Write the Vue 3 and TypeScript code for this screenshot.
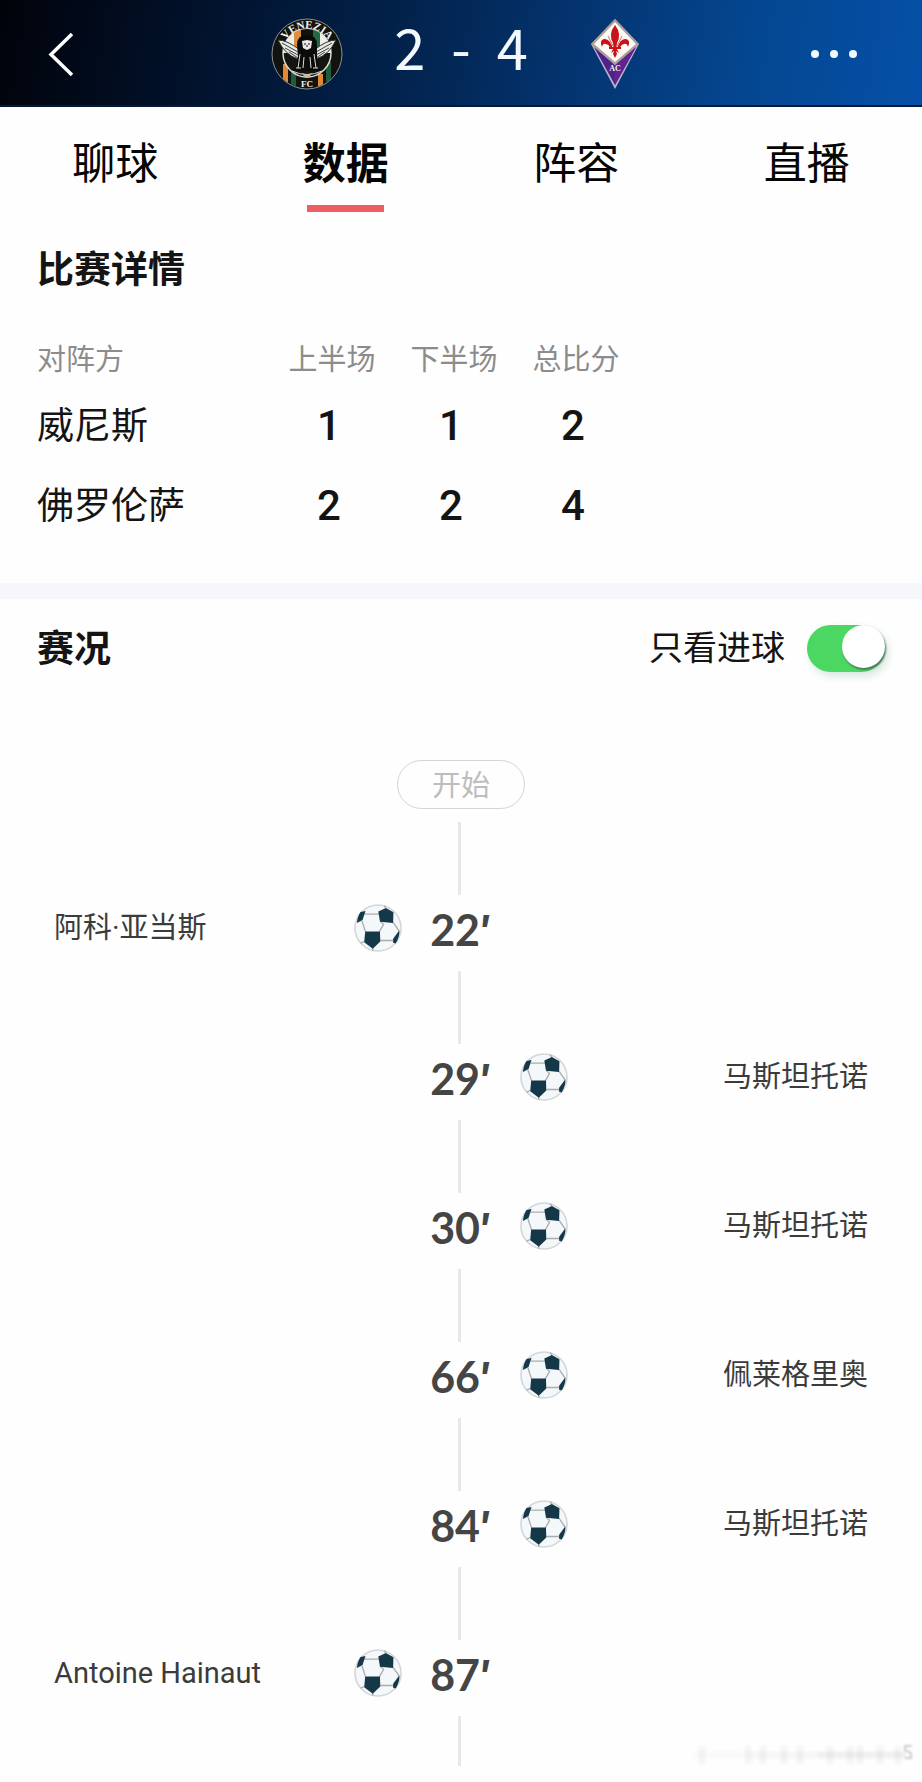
<script setup lang="ts">
import { ref } from 'vue'

interface MatchEvent {
  minute: number
  player: string
  side: 'home' | 'away'
}

const tabs = ['聊球', '数据', '阵容', '直播']
const activeTab = ref('数据')
const goalsOnly = ref(true)

const scores = [
  { team: '威尼斯', first: 1, second: 1, total: 2 },
  { team: '佛罗伦萨', first: 2, second: 2, total: 4 },
]

const events: MatchEvent[] = [
  { minute: 22, player: '阿科·亚当斯', side: 'home' },
  { minute: 29, player: '马斯坦托诺', side: 'away' },
  { minute: 30, player: '马斯坦托诺', side: 'away' },
  { minute: 66, player: '佩莱格里奥', side: 'away' },
  { minute: 84, player: '马斯坦托诺', side: 'away' },
  { minute: 87, player: 'Antoine Hainaut', side: 'home' },
]
</script>

<template>
  <div class="page">
    <svg class="defs" width="0" height="0" aria-hidden="true">
      <symbol id="ball" viewBox="0 0 146 146">
        <circle cx="73" cy="73" r="70" fill="#f5f8fa" stroke="#d3d7db" stroke-width="5" />
        <g fill="none" stroke="#a9adab" stroke-width="4">
          <path d="M32 31H76M80 53L90 62L77 85M24 51L35 84M119 56L137 82M80 111H121M31 114L20 119M57 134V142M97 13L92 5" />
        </g>
        <g fill="#143847">
          <path d="M97 12L74 23L79 54L119 58L120 25Z" />
          <path d="M34 84L79 84L80 114L57 136L31 116Z" />
          <path d="M20 24L35 21L26 49L9 58Q10 38 20 24Z" />
          <path d="M119 106L138 80Q140 98 127 120L119 118Z" />
        </g>
      </symbol>
    </svg>

    <header class="top">
      <button class="icon-btn" type="button" aria-label="返回">
        <svg width="28" height="48" viewBox="0 0 28 48">
          <path d="M24 4L3 24.500L24 45" fill="none" stroke="#fff" stroke-width="3.500" />
        </svg>
      </button>
      <div class="match">
        <svg class="crest" width="72" height="72" viewBox="0 0 72 72" role="img" aria-label="Venezia FC">
          <defs>
            <clipPath id="disc"><circle cx="36" cy="36" r="34.500" /></clipPath>
            <clipPath id="inner"><circle cx="36" cy="35" r="24" /></clipPath>
            <path id="arc" d="M11 31A25.500 25.500 0 0 1 61 31" />
          </defs>
          <circle cx="36" cy="36" r="35" fill="#12130f" stroke="#8b8f90" stroke-width="1" />
          <g clip-path="url(#disc)">
            <path d="M12 46h5v26h-5zM47 56h5v16h-5z" fill="#e08a35" />
            <path d="M20 50h5v22h-5zM55 44h5v26h-5z" fill="#1d5d3c" />
          </g>
          <circle cx="36" cy="35" r="24" fill="#15150f" stroke="#d9dcd8" stroke-width="1.500" />
          <g clip-path="url(#inner)">
            <path d="M12 11h12v24H12zM48 11h12v24H48z" fill="#eceee8" />
            <path d="M23 11h7v20h-7z" fill="#dc8e3c" />
            <path d="M30 11h12v14H30z" fill="#12130f" />
            <path d="M42 11h7v20h-7z" fill="#226a47" />
          </g>
          <path d="M7 22Q16 22 29 32L27 41Q14 37 7 22ZM65 22Q56 22 43 32L45 41Q58 37 65 22Z" fill="#e6e8e5" stroke="#30342f" stroke-width="1" />
          <path d="M11 25L27 34M14 30L27 37M18 34L27 40M61 25L45 34M58 30L45 37M54 34L45 40" stroke="#41453f" stroke-width="1" />
          <path d="M36 17Q46 17 46 27L46 38L47 50L51 53H21L25 50L27 38L26 27Q26 17 36 17Z" fill="#0b0c09" />
          <path d="M31 23L36 22L41 23L40 30L36 32L32 30Z" fill="#e9ebe8" />
          <path d="M33 26h2M37 26h2M36 27v2" stroke="#111" stroke-width="1" />
          <path d="M29 36L27 50M43 36L45 50M33 39L32 50M39 39L40 50M21 53Q36 60 51 53M25 50H30M42 50H47" fill="none" stroke="#dadcd8" stroke-width="1" />
          <path d="M31 55L36 57L41 55L38 60H34Z" fill="#c9b7a3" />
          <text class="crest-name"><textPath href="#arc" startOffset="50%" text-anchor="middle">VENEZIA</textPath></text>
          <text class="crest-fc" x="36" y="69" text-anchor="middle">FC</text>
        </svg>
        <div class="score"><span>2</span><span>-</span><span>4</span></div>
        <svg class="crest" width="72" height="72" viewBox="0 0 72 72" role="img" aria-label="AC Fiorentina">
          <path d="M36 1L60 26L36 71L12 26Z" fill="#b9b1c4" />
          <path d="M15 29L36 47L57 29L36 67Z" fill="#50208c" />
          <path d="M36 47L57 29L36 67Z" fill="#62258f" />
          <path d="M36 1L60 26L36 47L12 26Z" fill="#aaa194" />
          <path d="M36 4L57 26L36 44L15 26Z" fill="#fdfbf8" />
          <g fill="#c9131a">
            <path d="M36 7Q43 16 38 25L37 33L38 36L36 40L34 36L35 33L34 25Q29 16 36 7Z" />
            <path d="M34 31Q31 20 25 21Q20 22 23 29Q24 25 27 26Q31 27 31 31ZM38 31Q41 20 47 21Q52 22 49 29Q48 25 45 26Q41 27 41 31Z" />
            <path d="M30 29h12v2H30zM32 35L34 31H38L40 35L37 33H35Z" />
          </g>
          <path d="M34 28L29 18M38 28L43 18" stroke="#d76b68" stroke-width="1" />
          <text class="crest-ac" x="36" y="53" text-anchor="middle">AC</text>
        </svg>
      </div>
      <button class="icon-btn more" type="button" aria-label="更多">
        <svg width="48" height="48" viewBox="0 0 48 48" fill="#f1faff">
          <circle cx="5" cy="24" r="4" /><circle cx="24" cy="24" r="4" /><circle cx="43" cy="24" r="4" />
        </svg>
      </button>
    </header>

    <nav class="tabs">
      <button
        v-for="tab in tabs"
        :key="tab"
        type="button"
        class="tab"
        :class="{ active: tab === activeTab }"
        @click="activeTab = tab"
      >
        {{ tab }}
      </button>
    </nav>

    <section class="details">
      <h2>比赛详情</h2>
      <table>
        <thead>
          <tr>
            <th class="team" scope="col">对阵方</th>
            <th scope="col">上半场</th>
            <th scope="col">下半场</th>
            <th scope="col">总比分</th>
          </tr>
        </thead>
        <tbody>
          <tr v-for="row in scores" :key="row.team">
            <th class="team" scope="row">{{ row.team }}</th>
            <td>{{ row.first }}</td>
            <td>{{ row.second }}</td>
            <td>{{ row.total }}</td>
          </tr>
        </tbody>
      </table>
    </section>

    <section class="timeline">
      <div class="timeline-head">
        <h2>赛况</h2>
        <label class="switch">
          <span class="switch-text">只看进球</span>
          <input v-model="goalsOnly" type="checkbox" role="switch" />
        </label>
      </div>
      <div class="start">开始</div>
      <ol>
        <li v-for="event in events" :key="event.minute" :class="event.side">
          <span class="player">{{ event.player }}</span>
          <svg class="ball" width="48" height="48" aria-hidden="true"><use href="#ball" /></svg>
          <span class="minute">{{ event.minute }}<span class="prime">′</span></span>
        </li>
      </ol>
      <div class="tail">
        <svg class="mark" width="226" height="32" viewBox="0 0 226 32" aria-hidden="true">
          <g stroke="#555" stroke-width="7">
            <path d="M4 17H60" opacity="0.020" />
            <path d="M60 17H130" opacity="0.040" />
            <path d="M130 17H218" opacity="0.080" />
            <path d="M14 8V26M60 8V26M75 8V26M96 8V26M112 8V26M142 8V26M162 8V26M172 8V26M192 8V26M210 8V26" opacity="0.050" />
          </g>
          <path d="M224 8H217V12L223 15V20H217" fill="none" stroke="#555" stroke-width="2" opacity="0.300" />
        </svg>
      </div>
    </section>
  </div>
</template>

<style>
body {
  margin: 0;
  background: #fefefe;
}
</style>

<style scoped>
.page {
  overflow: hidden;
  color: #141414;
  font-family: "Noto Sans CJK SC", sans-serif;
}

.defs {
  position: absolute;
}

button {
  margin: 0;
  padding: 0;
  border: 0;
  background: none;
  color: inherit;
  font-family: inherit;
}

.top {
  display: grid;
  grid-template-columns: 1fr 380px 1fr;
  align-items: center;
  box-sizing: border-box;
  height: 107px;
  padding: 2px 64px 0 48px;
  border-bottom: 2px solid #04183a;
  background: linear-gradient(100deg, #01030a 0%, #01122c 22%, #022149 42%, #04326c 60%, #04468f 80%, #0550a8 100%);
}

.icon-btn {
  display: flex;
  justify-self: start;
}

.more {
  justify-self: end;
}

.match {
  display: flex;
  align-items: center;
  justify-content: space-between;
  margin: 0 -8px 0 8px;
}

.crest-name,
.crest-fc,
.crest-ac {
  fill: #f4f4f0;
  font-family: "Liberation Serif", serif;
  font-weight: 700;
  font-size: 11px;
}

.crest-fc {
  font-size: 9px;
}

.crest-ac {
  font-size: 8px;
}

.score {
  display: flex;
  gap: 26px;
  padding-bottom: 16px;
  color: #f3f8ff;
  font-size: 56px;
  line-height: 64px;
}

.tabs {
  display: flex;
}

.tab {
  position: relative;
  flex: 1;
  height: 106px;
  color: #050505;
  font-size: 43px;
  line-height: 100px;
}

.tab.active {
  font-weight: 700;
}

.tab.active::after {
  content: "";
  position: absolute;
  bottom: 1px;
  left: 50%;
  width: 77px;
  height: 7px;
  margin-left: -39px;
  background: #ed5f60;
}

h2 {
  margin: 0;
  padding-bottom: 4px;
  font-size: 37px;
  font-weight: 700;
  line-height: 44px;
}

.details {
  padding: 32px 37px 38px;
}

table {
  width: 600px;
  max-width: 100%;
  margin-top: 38px;
  border-collapse: collapse;
  table-layout: fixed;
}

th,
td {
  width: 122px;
  padding: 0;
  font-weight: 400;
  text-align: center;
}

thead th {
  height: 54px;
  padding-bottom: 2px;
  color: #8c8c8c;
  font-size: 29px;
  line-height: 52px;
}

thead th,
tbody th {
  box-sizing: border-box;
}

.team {
  width: 234px;
  text-align: left;
}

tbody th {
  height: 80px;
  padding-bottom: 4px;
  font-size: 37px;
  line-height: 76px;
}

tbody td {
  box-sizing: border-box;
  height: 80px;
  padding: 2px 6px 0 0;
  font-family: Roboto, sans-serif;
  font-size: 42px;
  font-weight: 500;
  line-height: 78px;
}

.timeline {
  border-top: 16px solid #f6f7fb;
}

.timeline-head {
  display: flex;
  align-items: center;
  justify-content: space-between;
  height: 98px;
  padding: 0 37px;
}

.switch {
  display: flex;
  align-items: center;
  gap: 22px;
  font-size: 34px;
  line-height: 44px;
}

.switch-text {
  padding-bottom: 4px;
}

.switch input {
  display: flex;
  align-items: flex-start;
  box-sizing: border-box;
  width: 78px;
  height: 47px;
  margin: 0;
  border-radius: 24px;
  background: #d8d8d8;
  appearance: none;
  box-shadow: 3px 4px 8px #d5e6dc;
}

.switch input::before {
  content: "";
  width: 43px;
  height: 43px;
  border-radius: 50%;
  background: #fff;
  box-shadow: 1px 2px 2px #48795a;
}

.switch input:checked {
  justify-content: flex-end;
  background: #4cd763;
}

.start {
  box-sizing: border-box;
  width: 128px;
  height: 49px;
  margin: 63px auto 13px;
  border: 1px solid #d4d4d4;
  border-radius: 25px;
  color: #bdbdbd;
  font-size: 29px;
  line-height: 44px;
  text-align: center;
}

ol {
  margin: 0;
  padding: 0;
  list-style: none;
}

li {
  display: grid;
  grid-template-columns: 1fr 48px 118px 48px 1fr;
  grid-template-rows: 73px 66px;
  align-items: center;
  padding: 0 54px 10px;
}

li::before,
.tail::before {
  content: "";
  grid-row: 1;
  grid-column: 3;
  justify-self: center;
  width: 3px;
  height: 73px;
  margin-right: 4px;
  background: #e8e8e8;
}

.player,
.ball,
.minute {
  grid-row: 2;
}

.player {
  grid-column: 1;
  color: #3b3b3b;
  font-family: Roboto, "Noto Sans CJK SC", sans-serif;
  font-size: 29px;
  line-height: 40px;
}

.ball {
  grid-column: 2;
}

.minute {
  grid-column: 3;
  padding-top: 4px;
  color: #454545;
  font-family: Lato, "Noto Sans", sans-serif;
  font-size: 43px;
  font-weight: 700;
  line-height: 48px;
  text-align: center;
}

.prime {
  font-family: Inter, sans-serif;
}

.away .player {
  grid-column: 5;
  text-align: right;
}

.away .ball {
  grid-column: 4;
}

.tail {
  display: grid;
  grid-template-columns: 1fr 116px 1fr;
  padding: 0 8px 8px;
}

.tail::before {
  grid-column: 2;
  height: 50px;
}

.mark {
  grid-row: 1;
  grid-column: 3;
  align-self: end;
  justify-self: end;
  margin-bottom: -4px;
  filter: blur(1px);
}
</style>
